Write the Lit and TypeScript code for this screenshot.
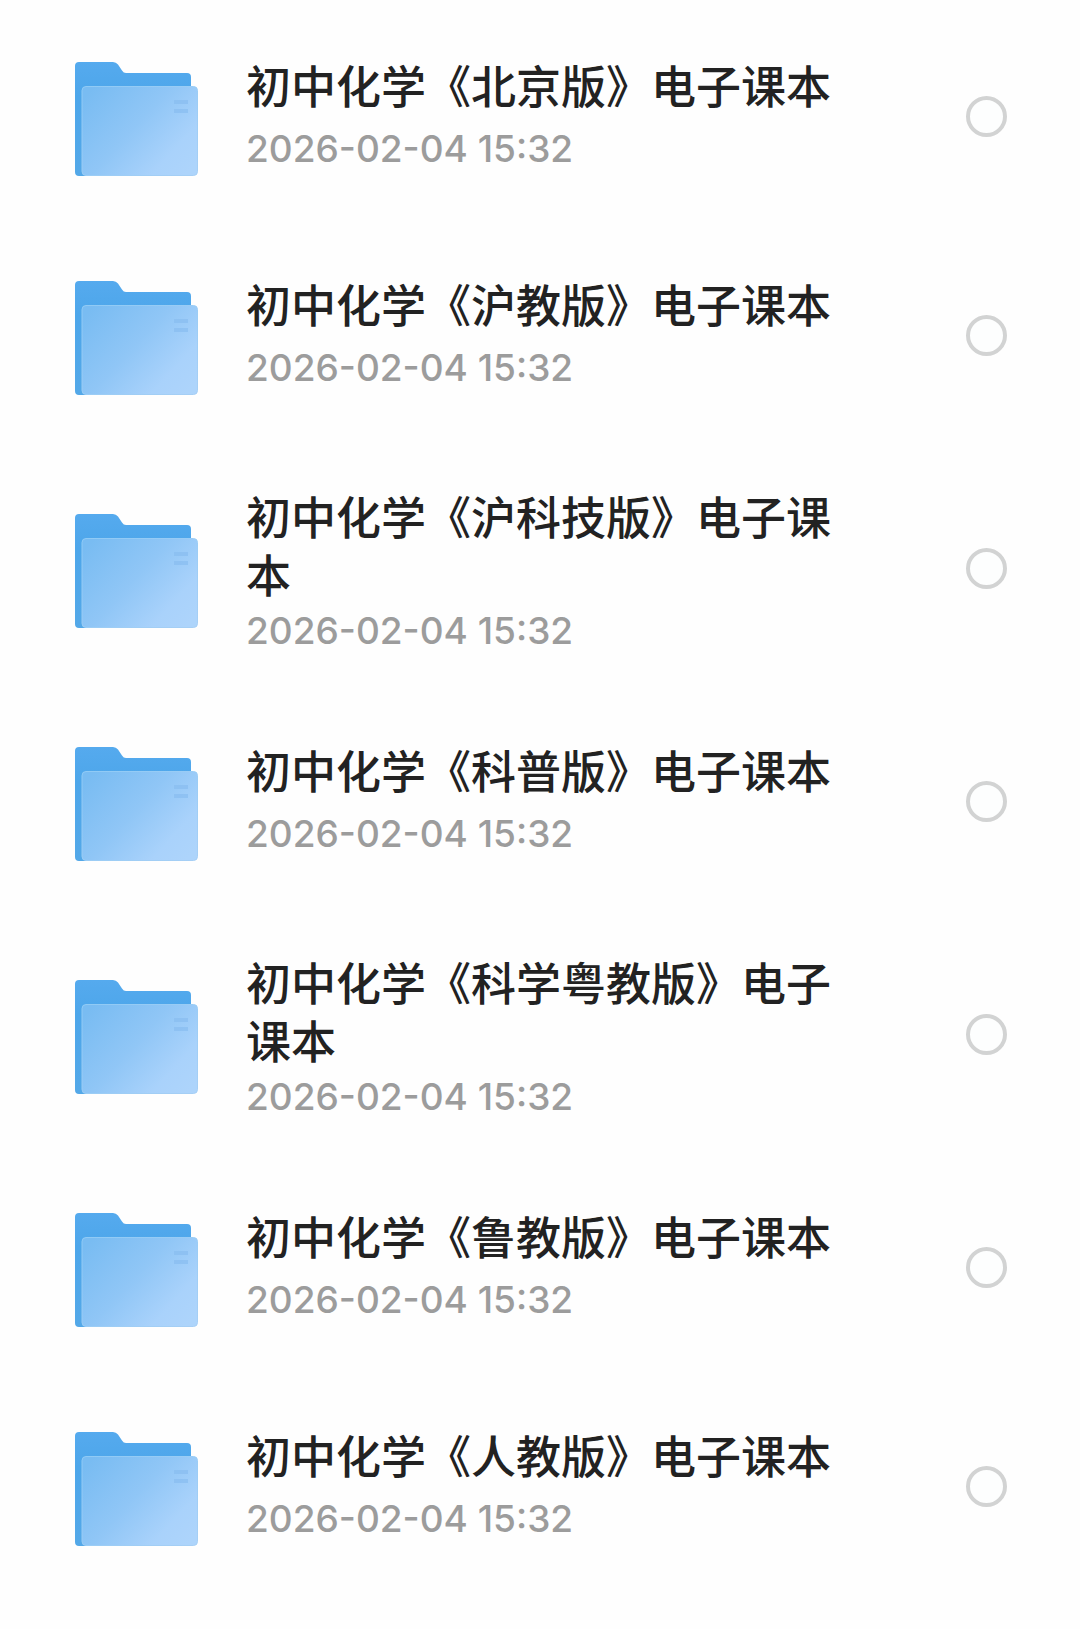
import { LitElement, html, css, svg } from "lit";
import { customElement, property, state } from "lit/decorators.js";

interface Folder {
  name: string;
  modified: string;
}

const FOLDERS: Folder[] = [
  { name: "初中化学《北京版》电子课本", modified: "2026-02-04 15:32" },
  { name: "初中化学《沪教版》电子课本", modified: "2026-02-04 15:32" },
  { name: "初中化学《沪科技版》电子课本", modified: "2026-02-04 15:32" },
  { name: "初中化学《科普版》电子课本", modified: "2026-02-04 15:32" },
  { name: "初中化学《科学粤教版》电子课本", modified: "2026-02-04 15:32" },
  { name: "初中化学《鲁教版》电子课本", modified: "2026-02-04 15:32" },
  { name: "初中化学《人教版》电子课本", modified: "2026-02-04 15:32" },
];

const folderShapes = svg`
  <defs>
    <linearGradient id="back" x1="0" y1="0" x2="0" y2="1">
      <stop offset="0" stop-color="#55aaee" />
      <stop offset="0.3" stop-color="#4da6ea" />
      <stop offset="1" stop-color="#53a8e8" />
    </linearGradient>
    <linearGradient id="front" x1="0" y1="0.15" x2="1" y2="0.85">
      <stop offset="0" stop-color="#79bcf2" />
      <stop offset="0.45" stop-color="#90c6f6" />
      <stop offset="0.8" stop-color="#a9d2fb" />
      <stop offset="1" stop-color="#add4fb" />
    </linearGradient>
    <linearGradient id="edge" x1="0" y1="0" x2="1" y2="1">
      <stop offset="0" stop-color="#8fcaf5" />
      <stop offset="1" stop-color="#a6cff5" />
    </linearGradient>
  </defs>
  <path fill="url(#back)" d="M5 3H39Q42 3 44 5.500L48 11.500Q49.500 14 52 14H113Q117 14 117 18V60L20 117H5Q1 117 1 113V7Q1 3 5 3Z" />
  <rect x="8" y="27.500" width="115.500" height="89" rx="4" fill="url(#front)" stroke="url(#edge)" />
  <path fill="#8abdf0" fill-opacity="0.75" d="M100 41H114V45H100ZM100 50H114V54H100Z" />
`;

@customElement("folder-row")
export class FolderRow extends LitElement {
  @property() name = "";
  @property() modified = "";
  @state() private selected = false;

  static styles = css`
    :host {
      display: block;
    }
    .row {
      display: grid;
      grid-template-columns: 124px minmax(0, 1fr) 40px;
      column-gap: 48px;
      align-items: center;
      box-sizing: border-box;
      min-height: 219px;
      padding: 0 74px;
      cursor: pointer;
    }
    .icon {
      display: block;
      width: 124px;
      height: 119px;
    }
    .text {
      align-self: start;
      display: flex;
      flex-direction: column;
      gap: 3px;
      max-width: 600px;
      padding: 42px 0 36px;
    }
    .name {
      display: flex;
      align-items: center;
      min-height: 72px;
      color: #222;
      font-size: 45px;
      font-weight: 500;
      line-height: 58px;
    }
    .date {
      color: #9c9c9c;
      font-family: Inter, "Noto Sans CJK SC", sans-serif;
      font-size: 37px;
      font-weight: 500;
      line-height: 50px;
    }
    .check {
      appearance: none;
      width: 41px;
      height: 41px;
      margin: 0;
      border: 4px solid #d2d3d3;
      border-radius: 50%;
      background: #fdfefe;
      cursor: pointer;
    }
    .check:checked {
      border-color: #4da6ea;
      background: #4da6ea;
    }
  `;

  private toggle(event: Event) {
    this.selected = (event.target as HTMLInputElement).checked;
  }

  render() {
    return html`
      <label class="row" for="pick">
        <svg class="icon" viewBox="0 -2 124 119" aria-hidden="true">${folderShapes}</svg>
        <span class="text">
          <span class="name">${this.name}</span>
          <time class="date">${this.modified}</time>
        </span>
        <input class="check" id="pick" type="checkbox" .checked=${this.selected} @change=${this.toggle} />
      </label>
    `;
  }
}

@customElement("app-root")
export class AppRoot extends LitElement {
  static styles = css`
    :host {
      display: block;
      min-height: 100vh;
      box-sizing: border-box;
      background: #fefefe;
      font-family: "Noto Sans CJK SC", sans-serif;
    }
    .list {
      margin: 0;
      padding: 7px 0 32px;
      list-style: none;
    }
  `;

  render() {
    return html`
      <ul class="list" lang="zh-CN">
        ${FOLDERS.map(
          (folder) => html`<li>
            <folder-row .name=${folder.name} .modified=${folder.modified}></folder-row>
          </li>`
        )}
      </ul>
    `;
  }
}
